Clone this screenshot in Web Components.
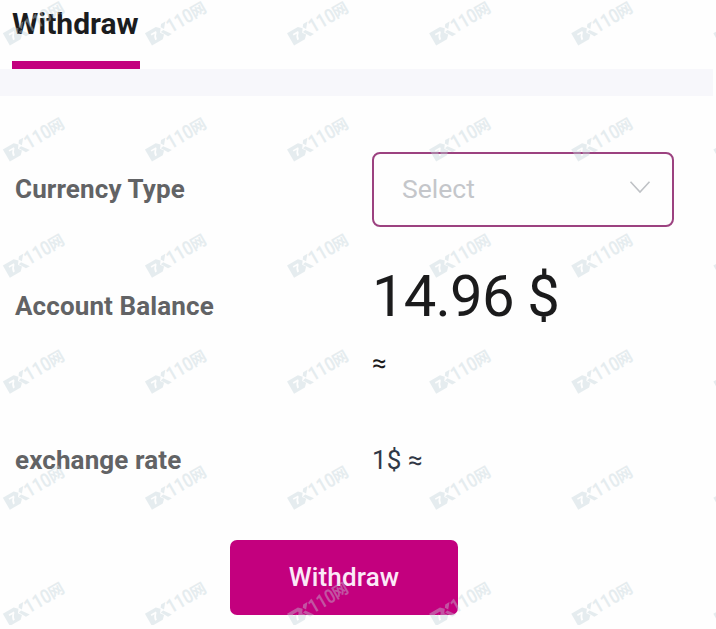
<!DOCTYPE html>
<html lang="en">
<head>
<meta charset="utf-8">
<title>Withdraw</title>
<style>
    body {
        margin: 0;
        background: #fefefe;
        font-family: Roboto, "Liberation Sans", sans-serif;
    }
</style>
</head>
<body>
<withdraw-page>
    <tab-header>Withdraw</tab-header>
    <form-row class="currency" label="Currency Type">
        <select-box>Select</select-box>
    </form-row>
    <form-row class="balance" label="Account Balance">
        <balance-value amount="14.96 $">≈</balance-value>
    </form-row>
    <form-row class="rate" label="exchange rate">
        <rate-value>1$ ≈</rate-value>
    </form-row>
    <submit-button>Withdraw</submit-button>
</withdraw-page>

<script>
class WithdrawPage extends HTMLElement {

    constructor() {
        super();
        this.shadow = this.attachShadow({mode: 'open'});
        this.render();
    }

    render() {
        this.shadow.innerHTML =
        `
        <style>
            :host {
                display: flex;
                flex-direction: column;
                position: relative;
                width: 716px;
                height: 629px;
            }

            ::slotted(.currency) {
                height: 76px;
                margin-top: 56px;
            }

            ::slotted(.balance) {
                height: 155px;
            }

            ::slotted(.rate) {
                height: 156px;
            }

            ::slotted(submit-button) {
                margin: 1px 0 0 230px;
            }
        </style>
        <slot></slot>
        <water-mark></water-mark>
        `;
    }
}

class TabHeader extends HTMLElement {

    constructor() {
        super();
        this.shadow = this.attachShadow({mode: 'open'});
        this.render();
    }

    render() {
        this.shadow.innerHTML =
        `
        <style>
            :host {
                display: block;
                flex: none;
            }

            .tabs {
                display: flex;
                height: 69px;
                padding-left: 12px;
            }

            .tab {
                box-sizing: border-box;
                width: 128px;
                padding-top: 6px;
                border-bottom: 8px solid #c3007e;
                color: #1b1c1e;
                font-size: 30px;
                font-weight: 700;
                line-height: 36px;
                white-space: nowrap;
            }

            .band {
                width: 713px;
                height: 27px;
                background: #f7f7fb;
            }
        </style>
        <div class="tabs"><div class="tab"><slot></slot></div></div>
        <div class="band"></div>
        `;
    }
}

class FormRow extends HTMLElement {

    constructor() {
        super();
        this.shadow = this.attachShadow({mode: 'open'});
        this.render();
    }

    render() {
        this.shadow.innerHTML =
        `
        <style>
            :host {
                display: grid;
                grid-template-columns: 357px 302px;
                flex: none;
                padding-left: 15px;
            }

            .label {
                padding-top: var(--label-top, 21px);
                color: #626365;
                font-size: 26px;
                font-weight: 700;
                letter-spacing: 0.12px;
                line-height: 32px;
                white-space: nowrap;
            }

            :host(.balance) {
                --label-top: 62px;
            }

            :host(.rate) {
                --label-top: 61px;
            }
        </style>
        <div class="label">${this.getAttribute('label')}</div>
        <slot></slot>
        `;
    }
}

class SelectBox extends HTMLElement {

    constructor() {
        super();
        this.shadow = this.attachShadow({mode: 'open'});
        this.render();
    }

    render() {
        this.shadow.innerHTML =
        `
        <style>
            :host {
                display: flex;
                align-items: center;
                justify-content: space-between;
                box-sizing: border-box;
                height: 75px;
                padding: 0 21px 0 28px;
                border: 2px solid #9c4280;
                border-radius: 8px;
                color: #c4c6ca;
                font-size: 26.5px;
            }

            span {
                padding-bottom: 3px;
            }

            svg {
                display: block;
                margin-bottom: 6px;
            }
        </style>
        <span><slot></slot></span>
        <svg width="22" height="14" viewBox="0 0 22 14" fill="none" stroke="#bfc2c6" stroke-width="1.6">
            <path d="M1.5 1.8 11 12 20.5 1.8"/>
        </svg>
        `;
    }
}

class BalanceValue extends HTMLElement {

    constructor() {
        super();
        this.shadow = this.attachShadow({mode: 'open'});
        this.render();
    }

    render() {
        this.shadow.innerHTML =
        `
        <style>
            :host {
                display: block;
                padding-top: 33px;
                color: #1b1b1c;
            }

            .amount {
                font-size: 58px;
                letter-spacing: -0.8px;
                line-height: 70px;
                white-space: nowrap;
            }

            .converted {
                padding-top: 16px;
                font-size: 26px;
                line-height: 32px;
            }
        </style>
        <div class="amount">${this.getAttribute('amount')}</div>
        <div class="converted"><slot></slot></div>
        `;
    }
}

class RateValue extends HTMLElement {

    constructor() {
        super();
        this.shadow = this.attachShadow({mode: 'open'});
        this.render();
    }

    render() {
        this.shadow.innerHTML =
        `
        <style>
            :host {
                display: block;
                padding-top: 61px;
                color: #303846;
                font-size: 26px;
                letter-spacing: 0.15px;
                line-height: 32px;
            }
        </style>
        <slot></slot>
        `;
    }
}

class SubmitButton extends HTMLElement {

    constructor() {
        super();
        this.shadow = this.attachShadow({mode: 'open'});
        this.render();
    }

    render() {
        this.shadow.innerHTML =
        `
        <style>
            :host {
                display: block;
                flex: none;
                width: 228px;
                height: 75px;
            }

            button {
                width: 100%;
                height: 100%;
                padding: 0 0 2px;
                border: 0;
                border-radius: 7px;
                background: #c3007e;
                color: #fbe9f7;
                font-family: inherit;
                font-size: 26px;
                font-weight: 500;
                letter-spacing: 0.15px;
                cursor: pointer;
            }
        </style>
        <button><slot></slot></button>
        `;
    }
}

// Repeated diagonal stamp laid over the whole page
class WaterMark extends HTMLElement {

    constructor() {
        super();
        this.shadow = this.attachShadow({mode: 'open'});
        this.render();
    }

    render() {
        let stamps = '';
        for (let row = 0; row < 6; row++) {
            for (let col = 0; col < 6; col++) {
                const x = 9.6 + col * 142.1;
                const y = 45 + row * 116.1;
                // the last column only shows the edge of its logo
                const text = col < 5 ? `
                    <text x="22.5" y="-0.5" font-size="19.5" font-weight="600" textLength="28" lengthAdjust="spacingAndGlyphs">110</text>
                    <text class="cjk" x="50" y="-1.5" font-size="15.5">网</text>` : '';
                stamps += `
                <g transform="translate(${x} ${y}) rotate(-30)">
                    <path fill-rule="evenodd" d="M0 0.5V-13.5H12.5L16-10 13.4-6.5 16-3 12.5 0.5ZM4.6-10V-8.4H8.2Q5.6-6 5.4-2.4H7.4Q7.6-6 10.6-8.6V-10Z"/>
                    <path d="M16.6-10.8 18.6-13.5H23.5L18.6-7.6ZM14.4-6.6 17.4-7.2 23 0.5H18.6Z"/>
                    ${text}
                </g>`;
            }
        }

        this.shadow.innerHTML =
        `
        <style>
            :host {
                display: block;
                position: absolute;
                inset: 0;
                pointer-events: none;
            }

            svg {
                display: block;
                fill: #c2d3d9;
                opacity: 0.4;
            }

            .cjk {
                font-family: "Noto Sans CJK SC", sans-serif;
                font-weight: 700;
            }
        </style>
        <svg width="716" height="625" viewBox="0 0 716 625">${stamps}</svg>
        `;
    }
}

customElements.define('withdraw-page', WithdrawPage);
customElements.define('tab-header', TabHeader);
customElements.define('form-row', FormRow);
customElements.define('select-box', SelectBox);
customElements.define('balance-value', BalanceValue);
customElements.define('rate-value', RateValue);
customElements.define('submit-button', SubmitButton);
customElements.define('water-mark', WaterMark);
</script>
</body>
</html>
